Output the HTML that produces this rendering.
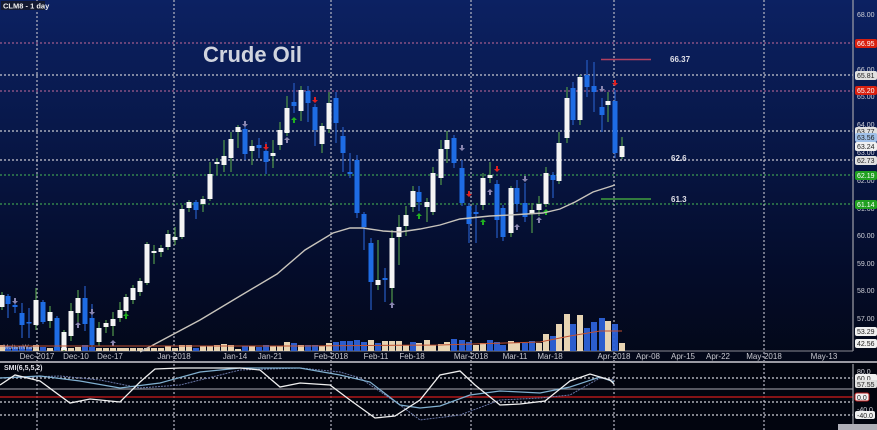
<!DOCTYPE html>
<html><head><meta charset="utf-8">
<style>
html,body{margin:0;padding:0;background:#020614;}
#c{position:relative;width:877px;height:430px;overflow:hidden;font-family:"Liberation Sans",sans-serif;}
svg{position:absolute;left:0;top:0}
</style></head>
<body><div id="c">
<svg id="s" width="877" height="430" viewBox="0 0 877 430" xmlns="http://www.w3.org/2000/svg">
<defs>
<linearGradient id="bg" x1="0" y1="0" x2="0" y2="1">
<stop offset="0" stop-color="#0c2162"/>
<stop offset="0.35" stop-color="#08184a"/>
<stop offset="0.75" stop-color="#040c2a"/>
<stop offset="1" stop-color="#030818"/>
</linearGradient>
</defs>
<rect x="0" y="0" width="877" height="362" fill="url(#bg)"/>
<rect x="0" y="362" width="877" height="68" fill="#02050f"/>
<g stroke-dasharray="2,2" stroke-width="1.2">
<line x1="0" y1="43" x2="853" y2="43" stroke="#a05c8c"/>
<line x1="0" y1="75" x2="853" y2="75" stroke="#c8c8d0"/>
<line x1="0" y1="91" x2="853" y2="91" stroke="#a05c8c"/>
<line x1="0" y1="131" x2="853" y2="131" stroke="#c8c8d0"/>
<line x1="0" y1="160" x2="853" y2="160" stroke="#c8c8d0"/>
<line x1="0" y1="175" x2="853" y2="175" stroke="#3c9a50"/>
<line x1="0" y1="204" x2="853" y2="204" stroke="#3c9a50"/>
<line x1="37" y1="0" x2="37" y2="430" stroke="#b8b8c4"/>
<line x1="174" y1="0" x2="174" y2="430" stroke="#b8b8c4"/>
<line x1="331" y1="0" x2="331" y2="430" stroke="#b8b8c4"/>
<line x1="471" y1="0" x2="471" y2="430" stroke="#b8b8c4"/>
<line x1="614" y1="0" x2="614" y2="430" stroke="#b8b8c4"/>
<line x1="764" y1="0" x2="764" y2="430" stroke="#b8b8c4"/>
<line x1="0" y1="378" x2="853" y2="378" stroke="#d0d0d8"/>
<line x1="0" y1="402" x2="853" y2="402" stroke="#d0d0d8"/>
<line x1="0" y1="415" x2="853" y2="415" stroke="#d0d0d8"/>
</g>
<line x1="0" y1="389" x2="853" y2="389" stroke="#8a8a92" stroke-width="1.2"/>
<line x1="0" y1="397" x2="853" y2="397" stroke="#b01818" stroke-width="1.5"/>
<line x1="853" y1="0" x2="853" y2="351" stroke="#a0a0a8" stroke-width="1.2"/>
<line x1="853" y1="364" x2="853" y2="430" stroke="#a0a0a8" stroke-width="1.2"/>
<line x1="0" y1="351" x2="853" y2="351" stroke="#8a8a92" stroke-width="1"/>
<line x1="0" y1="362" x2="877" y2="362" stroke="#9a9aa2" stroke-width="2"/>
<g id="cand"></g>
<polyline fill="none" stroke="#c8c4bc" stroke-width="1.4" points="140,352 170,336 200,320 240,296 277,274 305,250 333,233 350,228 363,228 383,231 400,232 420,229 440,225 460,219 490,216 510,215 543,213 560,209 575,202 593,192 615,185"/>
<line x1="601" y1="59.5" x2="651" y2="59.5" stroke="#b04060" stroke-width="1.5"/>
<line x1="601" y1="199" x2="651" y2="199" stroke="#40a040" stroke-width="1.5"/>
<g font-size="8" fill="#e0e0e8" font-weight="bold">
<text x="670" y="62">66.37</text>
<text x="671" y="161">62.6</text>
<text x="671" y="202">61.3</text>
</g>
<text x="203" y="62" font-size="22" font-weight="bold" fill="#d0d4de">Crude Oil</text>
<rect x="1" y="1" width="44" height="9" fill="#141a30"/>
<text x="3" y="8.5" font-size="7.5" font-weight="bold" fill="#f0f0f0">CLM8 - 1 day</text>
<text x="3" y="349" font-size="6.5" fill="#c0c0c8">MoltenWave</text>
<polyline fill="none" stroke="#c05030" stroke-width="1" points="0,346 300,346 440,345 540,342 570,336 600,331 622,331"/>
<g font-size="8" fill="#c8c8d0" text-anchor="middle">
<text x="37" y="359">Dec-2017</text><text x="76" y="359">Dec-10</text><text x="110" y="359">Dec-17</text>
<text x="174" y="359">Jan-2018</text><text x="235" y="359">Jan-14</text><text x="270" y="359">Jan-21</text>
<text x="331" y="359">Feb-2018</text><text x="376" y="359">Feb-11</text><text x="412" y="359">Feb-18</text>
<text x="471" y="359">Mar-2018</text><text x="515" y="359">Mar-11</text><text x="550" y="359">Mar-18</text>
<text x="614" y="359">Apr-2018</text><text x="648" y="359">Apr-08</text><text x="683" y="359">Apr-15</text>
<text x="718" y="359">Apr-22</text><text x="764" y="359">May-2018</text><text x="824" y="359">May-13</text>
</g>
<text x="4" y="370" font-size="7" font-weight="bold" fill="#e0e0e8">SMI(6,5,5,2)</text>
<polyline fill="none" stroke="#6a78a8" stroke-width="1" stroke-dasharray="2,1" points="0,378 60,376 100,380 140,388 180,385 200,380 240,370 300,368 340,372 360,378 400,405 420,420 460,415 500,400 540,398 570,395 600,378 614,380"/>
<polyline fill="none" stroke="#80b0d0" stroke-width="1.2" points="0,378 40,376 80,381 120,388 160,383 200,372 240,368 300,368 340,375 370,382 400,405 420,408 440,406 470,395 500,391 540,393 570,387 600,377 614,382"/>
<polyline fill="none" stroke="#f0f0f0" stroke-width="1.3" points="0,385 15,375 40,381 70,403 90,399 120,402 140,382 155,369 180,368 240,368 260,370 280,387 300,383 330,385 350,400 375,418 395,416 420,400 440,375 460,371 475,385 500,405 520,404 545,401 570,381 590,374 610,380 614,384"/>
<g font-size="7" fill="#d0d0d8">
<text x="857" y="17">68.00</text><text x="857" y="72">66.00</text><text x="857" y="99">65.00</text>
<text x="857" y="127">64.00</text><text x="857" y="155">63.00</text><text x="857" y="183">62.00</text>
<text x="857" y="211">61.00</text><text x="857" y="238">60.00</text><text x="857" y="266">59.00</text>
<text x="857" y="293">58.00</text><text x="857" y="321">57.00</text>
<text x="857" y="374">80.0</text><text x="857" y="412">-40.0</text>
</g>
<g font-size="7">
<rect x="855" y="39" width="22" height="9" rx="2" fill="#d82010"/><text x="857" y="46" fill="#fff">66.95</text>
<rect x="855" y="86" width="22" height="9" rx="2" fill="#d82010"/><text x="857" y="93" fill="#fff">65.20</text>
<rect x="855" y="71" width="22" height="9" rx="2" fill="#e0e0e0"/><text x="857" y="78" fill="#222">65.81</text>
<rect x="855" y="127" width="22" height="9" rx="2" fill="#e0e0e0"/><text x="857" y="134" fill="#222">63.77</text>
<rect x="855" y="133" width="22" height="9" rx="2" fill="#a0c0e8"/><text x="857" y="140" fill="#222">63.56</text>
<rect x="855" y="142" width="22" height="9" rx="2" fill="#f0f0f0"/><text x="857" y="149" fill="#222">63.24</text>
<rect x="855" y="156" width="22" height="9" rx="2" fill="#e0e0e0"/><text x="857" y="163" fill="#222">62.73</text>
<rect x="855" y="171" width="22" height="9" rx="2" fill="#20a020"/><text x="857" y="178" fill="#fff">62.19</text>
<rect x="855" y="200" width="22" height="9" rx="2" fill="#20a020"/><text x="857" y="207" fill="#fff">61.14</text>
<rect x="855" y="327" width="22" height="9" rx="2" fill="#f0f0f0"/><text x="857" y="334" fill="#222">53.29</text>
<rect x="855" y="339" width="22" height="9" rx="2" fill="#f0f0f0"/><text x="857" y="346" fill="#222">42.56</text>
<rect x="855" y="374" width="22" height="8" rx="2" fill="#f0f0f0"/><text x="857" y="381" fill="#222">60.0</text>
<rect x="855" y="380" width="22" height="8" rx="2" fill="#e0e0e0"/><text x="857" y="387" fill="#222">57.55</text>
<rect x="855" y="393" width="14" height="8" rx="2" fill="#f0f0f0" stroke="#c02020"/><text x="857" y="400" fill="#222">0.0</text>
<rect x="855" y="411" width="20" height="8" rx="2" fill="#f0f0f0"/><text x="857" y="418" fill="#222">-40.0</text>
</g>
<rect x="838" y="424" width="39" height="6" fill="#b0b0b8"/>
</svg>
<script>
var C=[
[2,295,307,292,310,'w'],[8,296,304,294,318,'b'],[15,305,307,303,313,'b'],[22,313,325,303,338,'b'],[29,322,323,308,338,'b'],
[36,300,325,288,330,'w'],[43,302,322,300,324,'b'],[50,312,321,306,328,'w'],[57,318,350,316,351,'b'],[64,332,350,330,351,'w'],
[71,311,336,303,341,'w'],[78,298,313,290,322,'w'],[85,298,324,286,331,'b'],[92,318,345,304,348,'b'],[99,328,342,322,346,'w'],
[106,323,327,320,333,'w'],[113,319,326,312,336,'w'],[120,310,318,302,322,'w'],[126,297,311,294,316,'w'],[133,288,300,285,304,'w'],
[140,281,292,278,296,'w'],[147,244,283,242,285,'w'],[154,251,253,245,264,'w'],[161,248,252,245,257,'w'],[168,234,247,230,250,'w'],
[175,237,240,227,245,'w'],[182,209,237,205,239,'w'],[189,202,208,200,212,'w'],[196,202,210,200,219,'b'],[203,199,204,196,212,'w'],
[210,174,199,162,201,'w'],[217,162,164,158,175,'w'],[224,156,165,140,172,'w'],[231,139,158,132,172,'w'],[238,127,132,125,148,'w'],
[245,129,154,122,160,'b'],[252,146,151,140,165,'w'],[259,145,148,138,158,'b'],[266,151,162,142,174,'b'],[273,153,156,140,168,'w'],
[280,130,145,122,150,'w'],[287,108,133,96,136,'w'],[294,102,106,83,113,'b'],[301,90,111,86,121,'w'],[308,91,103,86,122,'b'],
[315,107,130,104,146,'b'],[322,126,144,123,153,'w'],[329,103,129,92,133,'w'],[336,98,123,92,143,'b'],[343,136,153,127,172,'b'],
[350,172,174,153,178,'b'],[357,160,213,155,218,'b'],[364,214,227,212,250,'b'],[371,243,282,238,310,'b'],[378,280,285,240,290,'w'],
[385,278,280,268,302,'b'],[392,238,288,230,305,'w'],[399,227,237,215,265,'w'],[406,215,226,206,236,'w'],[413,191,207,186,212,'w'],
[419,192,202,186,211,'b'],[427,202,207,198,222,'w'],[433,173,212,167,215,'w'],[441,149,178,140,185,'w'],[447,140,149,131,163,'w'],
[454,138,163,135,168,'b'],[462,168,203,160,206,'b'],[469,206,224,203,243,'b'],[476,212,214,205,243,'b'],[483,178,205,173,210,'w'],
[490,175,178,162,183,'w'],[497,184,220,180,238,'b'],[503,208,237,205,241,'b'],[511,188,233,186,237,'w'],[517,188,204,180,212,'b'],
[525,203,217,183,222,'b'],[532,210,214,203,233,'w'],[539,204,210,196,216,'w'],[546,173,204,167,207,'w'],[553,175,180,172,198,'b'],
[559,143,181,132,184,'w'],[567,98,138,87,143,'w'],[573,88,120,82,125,'b'],[580,77,120,75,125,'w'],[587,75,87,60,97,'b'],
[594,86,92,62,112,'b'],[602,107,115,98,132,'b'],[608,101,105,92,122,'w'],[615,101,153,90,158,'b'],[622,146,157,137,159,'w']];
var V=[[2,345,'w'],[8,346,'b'],[15,347,'b'],[22,346,'b'],[29,347,'b'],[36,345,'w'],[43,347,'b'],[50,348,'w'],[57,347,'b'],[64,348,'w'],[71,348,'w'],[78,347,'w'],[85,345,'b'],[92,347,'b'],[99,348,'w'],[106,348,'w'],[113,348,'w'],[120,348,'w'],[126,348,'w'],[133,348,'w'],[140,348,'w'],[147,348,'w'],[154,348,'w'],[161,348,'w'],[168,346,'w'],[175,348,'w'],[182,345,'w'],[189,345,'w'],[196,348,'b'],[203,346,'w'],[210,346,'w'],[217,345,'w'],[224,344,'w'],[231,345,'w'],[238,349,'w'],[245,346,'b'],[252,346,'w'],[259,347,'b'],[266,345,'b'],[273,346,'w'],[280,346,'w'],[287,342,'w'],[294,343,'b'],[301,345,'w'],[308,345,'b'],[315,345,'b'],[322,346,'w'],[329,343,'w'],[336,342,'b'],[343,341,'b'],[350,341,'b'],[357,340,'b'],[364,342,'b'],[371,340,'w'],[378,343,'b'],[385,341,'w'],[392,341,'w'],[399,341,'w'],[406,345,'w'],[413,342,'b'],[419,343,'w'],[427,340,'w'],[433,345,'w'],[441,344,'w'],[447,342,'w'],[454,339,'b'],[462,340,'b'],[469,342,'b'],[476,345,'w'],[483,343,'w'],[490,340,'b'],[497,342,'b'],[503,345,'b'],[511,341,'w'],[517,343,'w'],[525,343,'b'],[532,341,'b'],[539,343,'w'],[546,334,'w'],[553,336,'b'],[559,324,'w'],[567,314,'w'],[573,324,'b'],[580,315,'w'],[587,328,'b'],[594,322,'b'],[602,318,'b'],[608,321,'w'],[615,324,'b'],[622,343,'w']];
var ns='http://www.w3.org/2000/svg',g=document.getElementById('cand'),h='';
V.forEach(function(v){h+='<rect x="'+(v[0]-3)+'" y="'+v[1]+'" width="6" height="'+(351-v[1])+'" fill="'+(v[2]=='w'?'#f3dfbc':'#2d62d8')+'" opacity="0.95"/>';});
C.forEach(function(c){var w=c[5]=='w';h+='<line x1="'+c[0]+'" y1="'+c[3]+'" x2="'+c[0]+'" y2="'+c[4]+'" stroke="'+(w?'#4c8e48':'#2456b8')+'" stroke-width="1.3"/>';
h+='<rect x="'+(c[0]-2.5)+'" y="'+c[1]+'" width="5" height="'+Math.max(1.5,c[2]-c[1])+'" fill="'+(w?'#f4f4f4':'#1e6ce4')+'"/>';});
function ar(x,y,col,up){var d=up?'M'+x+','+y+' l-3,3 h2 v3 h2 v-3 h2 z':'M'+x+','+(y+6)+' l-3,-3 h2 v-3 h2 v3 h2 z';h+='<path d="'+d+'" fill="'+col+'"/>';}
ar(15,298,'#8a86b0',false);ar(126,313,'#20b020',true);ar(113,340,'#8a86b0',true);ar(78,322,'#8a86b0',true);ar(92,309,'#8a86b0',false);
ar(245,121,'#8a86b0',false);ar(266,144,'#e02020',false);ar(287,137,'#8a86b0',true);ar(294,117,'#20b020',true);ar(315,97,'#e02020',false);
ar(392,302,'#8a86b0',true);ar(419,213,'#20b020',true);ar(462,145,'#8a86b0',false);ar(469,191,'#e02020',false);ar(483,219,'#20b020',true);
ar(490,189,'#8a86b0',true);ar(497,166,'#e02020',false);ar(517,224,'#8a86b0',true);ar(525,176,'#8a86b0',false);ar(539,217,'#8a86b0',true);
ar(546,209,'#20b020',true);ar(602,86,'#8a86b0',false);ar(615,80,'#e02020',false);
g.innerHTML=h;
</script>
</div></body></html>
